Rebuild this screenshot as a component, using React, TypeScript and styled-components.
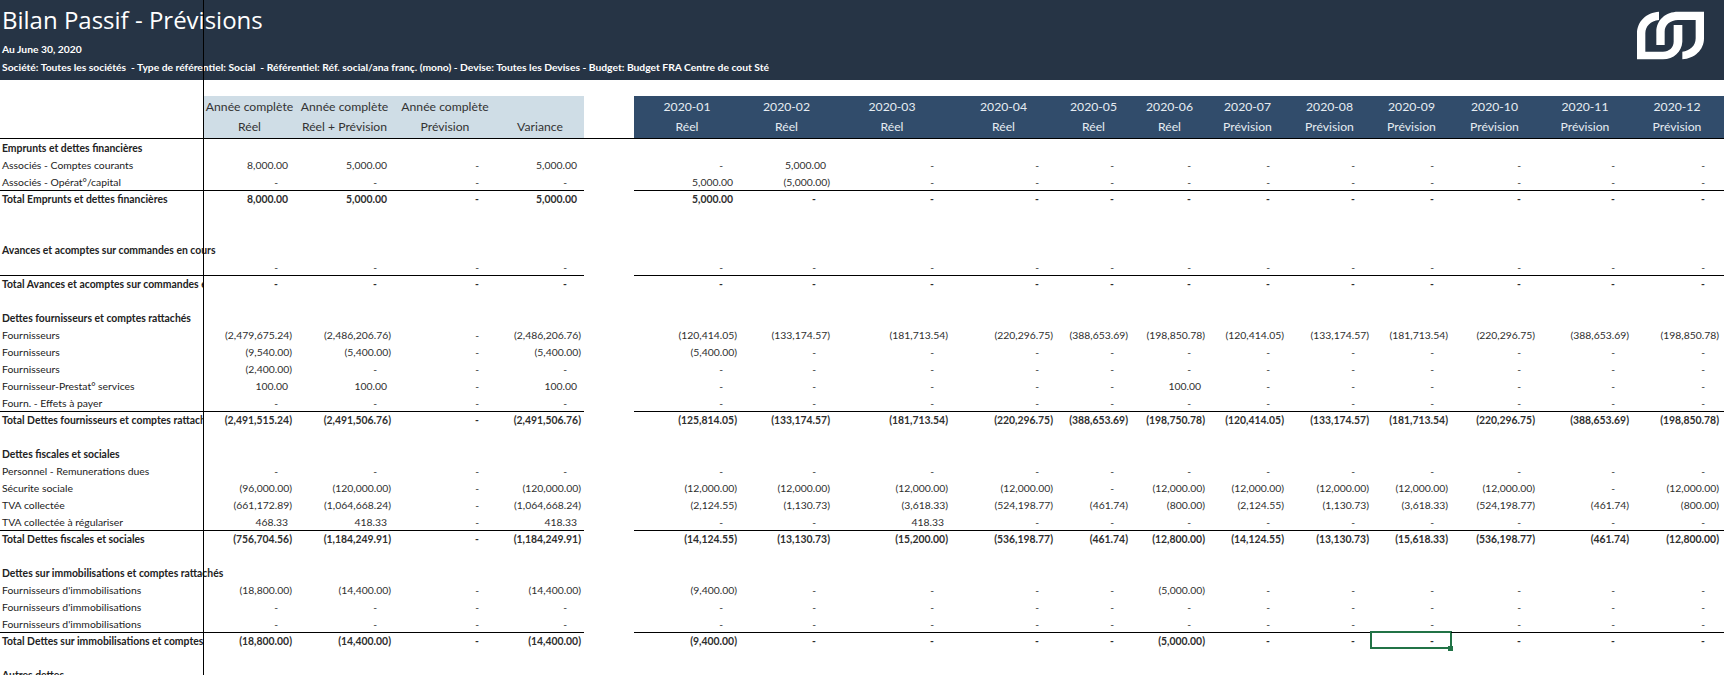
import React from "react";
import styled, { createGlobalStyle } from "styled-components";

const Global = createGlobalStyle`
  html, body { margin: 0; padding: 0; background: #fff; }
  body { font-family: "Lato", "Liberation Sans", sans-serif; }
`;

const Page = styled.div`
  position: relative;
  width: 1724px;
  height: 675px;
  overflow: hidden;
  background: #fff;
`;

const FreezeLine = styled.div`
  position: absolute;
  left: 203px;
  top: 0;
  bottom: 0;
  width: 1px;
  background: #000;
  z-index: 3;
`;

const Banner = styled.header`
  height: 80px;
  margin-bottom: 16px;
  background: #263445;
  color: #fff;
  display: flex;
  justify-content: space-between;
  align-items: flex-start;
  padding: 0 20px 0 2px;
  box-sizing: border-box;
`;

const BannerText = styled.div`
  display: flex;
  flex-direction: column;
`;

const Title = styled.h1`
  margin: 0;
  font: 400 24px/40px "Open Sans", sans-serif;
  letter-spacing: 0;
`;

const Meta = styled.div`
  font-size: 10.3px;
  font-weight: 700;
  line-height: 18px;
  white-space: pre;
`;

const Logo = styled.svg`
  width: 67px;
  height: 49px;
  margin-top: 11px;
  fill: #fff;
`;

const Sheet = styled.table`
  table-layout: fixed;
  width: 1724px;
  border-collapse: separate;
  border-spacing: 0;
  font-size: 10.4px;
  color: #2e2e2e;
`;

const HeadCell = styled.th<{ $tone: "light" | "dark" | "none"; $last?: boolean }>`
  padding: 0 0 ${(p) => (p.$last ? "3px" : "0")};
  box-sizing: border-box;
  height: ${(p) => (p.$last ? "22px" : "21px")};
  font-size: 12.2px;
  font-weight: 400;
  text-align: center;
  white-space: nowrap;
  vertical-align: middle;
  border-bottom: ${(p) => (p.$last ? "1px solid #000" : "none")};
  background: ${(p) => (p.$tone === "light" ? "#cfdde6" : p.$tone === "dark" ? "#314c6b" : "transparent")};
  color: ${(p) => (p.$tone === "dark" ? "#e6ecf2" : "#333")};
`;

const Row = styled.tr`
  height: 17px;
`;

const Label = styled.td<{ $bold?: boolean; $clip?: boolean; $line?: boolean }>`
  padding: 0 0 0 2px;
  box-sizing: border-box;
  height: 17px;
  white-space: nowrap;
  color: #222;
  font-weight: ${(p) => (p.$bold ? 700 : 400)};
  overflow: ${(p) => (p.$clip ? "hidden" : "visible")};
  border-top: ${(p) => (p.$line ? "1px solid #000" : "none")};
`;

const paddingFor = { neg: "3px", pos: "7px", dash: "17px" } as const;

const Value = styled.td<{ $kind: keyof typeof paddingFor; $bold?: boolean; $line?: boolean; $selected?: boolean }>`
  position: relative;
  padding: 0 ${(p) => paddingFor[p.$kind]} 0 0;
  box-sizing: border-box;
  height: 17px;
  text-align: right;
  white-space: nowrap;
  font-weight: ${(p) => (p.$bold ? 700 : 400)};
  border-top: ${(p) => (p.$line ? "1px solid #000" : "none")};
  ${(p) =>
    p.$selected
      ? `&::before {
          content: "";
          position: absolute;
          left: -2px; top: -2px; right: -1px; bottom: 0;
          border: 2px solid #217346;
        }
        &::after {
          content: "";
          position: absolute;
          right: -2px; bottom: -2px;
          width: 5px; height: 5px;
          background: #217346;
        }`
      : ""}
`;

const Gap = styled.td`
  padding: 0;
`;

const COLS = [204, 91, 99, 102, 88, 50, 106, 93, 118, 105, 75, 77, 79, 85, 79, 87, 94, 90, 2];

const yearHead = [
  ["Année complète", "Réel"],
  ["Année complète", "Réel + Prévision"],
  ["Année complète", "Prévision"],
  ["", "Variance"],
];
const monthHead = [
  "Réel", "Réel", "Réel", "Réel", "Réel", "Réel",
  "Prévision", "Prévision", "Prévision", "Prévision", "Prévision", "Prévision",
];

type RowData =
  | { type: "blank" }
  | { type: "head"; label: string }
  | { type: "line" | "total"; label: string; year: string[]; months: string[] };

const D = "-";
const dashes = (n: number) => Array<string>(n).fill(D);
const y0 = dashes(4);
const m0 = dashes(12);
const m = (over: Record<number, string>) => m0.map((v, i) => over[i + 1] ?? v);
const blank: RowData = { type: "blank" };
const line = (label: string, year = y0, months = m0): RowData => ({ type: "line", label, year, months });
const total = (label: string, year = y0, months = m0): RowData => ({ type: "total", label, year, months });
const head = (label: string): RowData => ({ type: "head", label });

const rows: RowData[] = [
  head("Emprunts et dettes financières"),
  line("Associés - Comptes courants", ["8,000.00", "5,000.00", D, "5,000.00"], m({ 2: "5,000.00" })),
  line("Associés - Opérat°/capital", y0, m({ 1: "5,000.00", 2: "(5,000.00)" })),
  total("Total Emprunts et dettes financières", ["8,000.00", "5,000.00", D, "5,000.00"], m({ 1: "5,000.00" })),
  blank,
  blank,
  head("Avances et acomptes sur commandes en cours"),
  line(""),
  total("Total Avances et acomptes sur commandes en cours"),
  blank,
  head("Dettes fournisseurs et comptes rattachés"),
  line(
    "Fournisseurs",
    ["(2,479,675.24)", "(2,486,206.76)", D, "(2,486,206.76)"],
    ["(120,414.05)", "(133,174.57)", "(181,713.54)", "(220,296.75)", "(388,653.69)", "(198,850.78)",
     "(120,414.05)", "(133,174.57)", "(181,713.54)", "(220,296.75)", "(388,653.69)", "(198,850.78)"],
  ),
  line("Fournisseurs", ["(9,540.00)", "(5,400.00)", D, "(5,400.00)"], m({ 1: "(5,400.00)" })),
  line("Fournisseurs", ["(2,400.00)", D, D, D]),
  line("Fournisseur-Prestat° services", ["100.00", "100.00", D, "100.00"], m({ 6: "100.00" })),
  line("Fourn. - Effets à payer"),
  total(
    "Total Dettes fournisseurs et comptes rattachés",
    ["(2,491,515.24)", "(2,491,506.76)", D, "(2,491,506.76)"],
    ["(125,814.05)", "(133,174.57)", "(181,713.54)", "(220,296.75)", "(388,653.69)", "(198,750.78)",
     "(120,414.05)", "(133,174.57)", "(181,713.54)", "(220,296.75)", "(388,653.69)", "(198,850.78)"],
  ),
  blank,
  head("Dettes fiscales et sociales"),
  line("Personnel - Remunerations dues"),
  line(
    "Sécurite sociale",
    ["(96,000.00)", "(120,000.00)", D, "(120,000.00)"],
    ["(12,000.00)", "(12,000.00)", "(12,000.00)", "(12,000.00)", D, "(12,000.00)",
     "(12,000.00)", "(12,000.00)", "(12,000.00)", "(12,000.00)", D, "(12,000.00)"],
  ),
  line(
    "TVA collectée",
    ["(661,172.89)", "(1,064,668.24)", D, "(1,064,668.24)"],
    ["(2,124.55)", "(1,130.73)", "(3,618.33)", "(524,198.77)", "(461.74)", "(800.00)",
     "(2,124.55)", "(1,130.73)", "(3,618.33)", "(524,198.77)", "(461.74)", "(800.00)"],
  ),
  line("TVA collectée à régulariser", ["468.33", "418.33", D, "418.33"], m({ 3: "418.33" })),
  total(
    "Total Dettes fiscales et sociales",
    ["(756,704.56)", "(1,184,249.91)", D, "(1,184,249.91)"],
    ["(14,124.55)", "(13,130.73)", "(15,200.00)", "(536,198.77)", "(461.74)", "(12,800.00)",
     "(14,124.55)", "(13,130.73)", "(15,618.33)", "(536,198.77)", "(461.74)", "(12,800.00)"],
  ),
  blank,
  head("Dettes sur immobilisations et comptes rattachés"),
  line("Fournisseurs d'immobilisations", ["(18,800.00)", "(14,400.00)", D, "(14,400.00)"], m({ 1: "(9,400.00)", 6: "(5,000.00)" })),
  line("Fournisseurs d'immobilisations"),
  line("Fournisseurs d'immobilisations"),
  total("Total Dettes sur immobilisations et comptes rattachés", ["(18,800.00)", "(14,400.00)", D, "(14,400.00)"], m({ 1: "(9,400.00)", 6: "(5,000.00)" })),
  blank,
  head("Autres dettes"),
];

const kindOf = (v: string): keyof typeof paddingFor => (v === D ? "dash" : v.startsWith("(") ? "neg" : "pos");

const SELECTED_ROW = 29;
const SELECTED_MONTH = 8;

export default function App() {
  return (
    <Page>
      <Global />
      <FreezeLine />
      <Banner>
        <BannerText>
          <Title>Bilan Passif - Prévisions</Title>
          <Meta>Au June 30, 2020</Meta>
          <Meta>Société: Toutes les sociétés  - Type de référentiel: Social  - Référentiel: Réf. social/ana franç. (mono) - Devise: Toutes les Devises - Budget: Budget FRA Centre de cout Sté</Meta>
        </BannerText>
        <Logo viewBox="112 33 201 147" aria-label="logo">
          <path d="M178 35V60C152 62 137 80 137 100V155H190C208 155 222 142 222 125V75H248V125C246 155 222 178 190 178H112V100C112 65 140 37 178 35Z" />
          <path d="M313 35V115C313 150 285 176 248 178V155C270 153 288 138 288 115V60H235C212 60 195 75 195 95V135H170V95C170 60 198 35 235 35Z" />
        </Logo>
      </Banner>
      <Sheet>
        <colgroup>
          {COLS.map((w, i) => (
            <col key={i} style={{ width: w }} />
          ))}
        </colgroup>
        <thead>
          <tr>
            <HeadCell $tone="none" />
            {yearHead.map((h, i) => (
              <HeadCell key={i} $tone="light">{h[0]}</HeadCell>
            ))}
            <HeadCell $tone="none" />
            {monthHead.map((_, i) => (
              <HeadCell key={i} $tone="dark">{`2020-${String(i + 1).padStart(2, "0")}`}</HeadCell>
            ))}
            <HeadCell $tone="dark" />
          </tr>
          <tr>
            <HeadCell $tone="none" $last />
            {yearHead.map((h, i) => (
              <HeadCell key={i} $tone="light" $last>{h[1]}</HeadCell>
            ))}
            <HeadCell $tone="none" $last />
            {monthHead.map((t, i) => (
              <HeadCell key={i} $tone="dark" $last>{t}</HeadCell>
            ))}
            <HeadCell $tone="dark" $last />
          </tr>
        </thead>
        <tbody>
          {rows.map((r, idx) => {
            if (r.type === "blank") {
              return (
                <Row key={idx}>
                  <Gap colSpan={COLS.length} />
                </Row>
              );
            }
            if (r.type === "head") {
              return (
                <Row key={idx}>
                  <Label $bold>{r.label}</Label>
                  <Gap colSpan={COLS.length - 1} />
                </Row>
              );
            }
            const isTotal = r.type === "total";
            return (
              <Row key={idx}>
                <Label $bold={isTotal} $clip={isTotal} $line={isTotal}>{r.label}</Label>
                {r.year.map((v, i) => (
                  <Value key={i} $kind={kindOf(v)} $bold={isTotal} $line={isTotal}>{v}</Value>
                ))}
                <Gap />
                {r.months.map((v, i) => (
                  <Value
                    key={i}
                    $kind={kindOf(v)}
                    $bold={isTotal}
                    $line={isTotal}
                    $selected={idx === SELECTED_ROW && i === SELECTED_MONTH}
                  >
                    {v}
                  </Value>
                ))}
                <Value $kind="dash" $line={isTotal} />
              </Row>
            );
          })}
        </tbody>
      </Sheet>
    </Page>
  );
}
